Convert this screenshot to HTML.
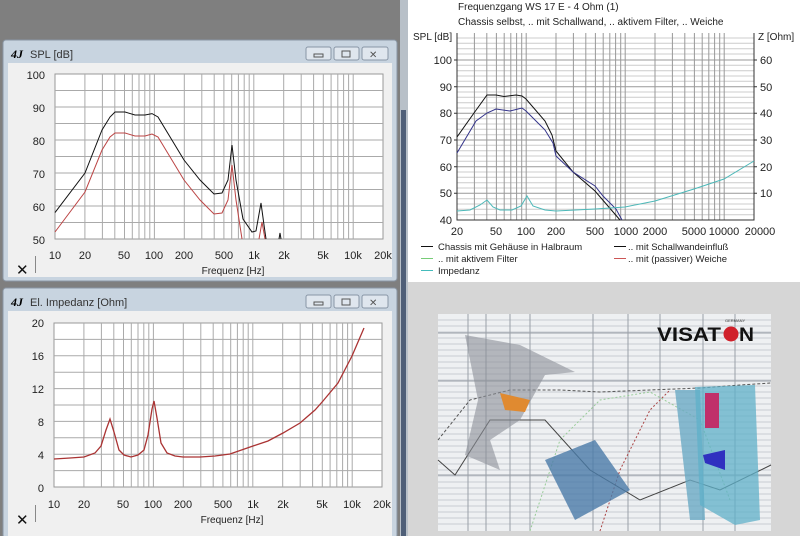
<!DOCTYPE html>
<html><head><meta charset="utf-8"><style>
html,body{margin:0;padding:0;width:800px;height:536px;overflow:hidden;background:#808080;font-family:"Liberation Sans",sans-serif}
svg{position:absolute;left:0;top:0}
</style></head><body>
<svg width="800" height="536" viewBox="0 0 800 536" font-family="Liberation Sans, sans-serif">
<rect x="0" y="0" width="400" height="536" fill="#7f7f7f"/>
<!-- Window 1 -->
<rect x="3" y="40" width="394" height="241" rx="3" fill="#c8d4e0" stroke="#8a96a4"/>
<rect x="8" y="63" width="384" height="214" fill="#f0f0f0"/>
<text x="11" y="58" font-size="12" font-family="Liberation Serif,serif" font-weight="bold" font-style="italic">4J</text>
<text x="30" y="58" font-size="11" fill="#333">SPL [dB]</text>
<g fill="#dfe6ee" stroke="#8896a6"><rect x="306" y="47" width="25" height="13" rx="2"/><rect x="334" y="47" width="25" height="13" rx="2"/><rect x="362" y="47" width="26" height="13" rx="2"/></g>
<rect x="314" y="54" width="9" height="3" fill="none" stroke="#555"/><rect x="342" y="51" width="8" height="6" fill="none" stroke="#555"/>
<text x="369" y="58" font-size="10" fill="#555">✕</text>
<rect x="55" y="74" width="328" height="165" fill="#fff" stroke="#999"/>
<path stroke="#aaa" stroke-width="1" fill="none" d="M84.9 74V239M102.4 74V239M114.8 74V239M124.5 74V239M132.3 74V239M139 74V239M144.8 74V239M149.8 74V239M154.4 74V239M184.3 74V239M201.8 74V239M214.2 74V239M223.9 74V239M231.7 74V239M238.4 74V239M244.2 74V239M249.2 74V239M253.8 74V239M283.7 74V239M301.2 74V239M313.6 74V239M323.3 74V239M331.1 74V239M337.8 74V239M343.6 74V239M348.6 74V239M353.2 74V239M55 90.5H383M55 107H383M55 123.5H383M55 140H383M55 156.5H383M55 173H383M55 189.5H383M55 206H383M55 222.5H383"/>
<path fill="none" stroke="#111" d="M55 212.6L85 173L102 130L110 117L115 112L125 112L135 115L145 115L152 113.6L158 117L184 160L200 180L214 194L222 193L228 180L232 145L236 180L243 219L252 232L256 231L261 203L264 225L266 239M279 239L280 233L281 239"/>
<path fill="none" stroke="#b44" d="M55 232L85 192L102 150L110 137L115 133L125 133L135 136L145 136L152 134L158 137L184 180L200 200L214 214L222 213L228 200L232 165L236 200L242 239M259 239L262 222L265 239"/>
<g font-size="11" fill="#222" text-anchor="end"><text x="45" y="79">100</text><text x="45" y="112">90</text><text x="45" y="145">80</text><text x="45" y="178">70</text><text x="45" y="211">60</text><text x="45" y="244">50</text></g>
<g font-size="11" fill="#222" text-anchor="middle"><text x="55" y="259">10</text><text x="85" y="259">20</text><text x="124" y="259">50</text><text x="154" y="259">100</text><text x="184" y="259">200</text><text x="224" y="259">500</text><text x="254" y="259">1k</text><text x="284" y="259">2k</text><text x="323" y="259">5k</text><text x="353" y="259">10k</text><text x="383" y="259">20k</text></g>
<text x="233" y="274" font-size="10" text-anchor="middle" fill="#222">Frequenz [Hz]</text>
<text x="16" y="275" font-size="15" fill="#111">✕</text><rect x="35" y="256" width="1" height="17" fill="#888"/>
<!-- Window 2 -->
<rect x="3" y="288" width="394" height="250" rx="3" fill="#c8d4e0" stroke="#8a96a4"/>
<rect x="8" y="311" width="384" height="225" fill="#f0f0f0"/>
<text x="11" y="306" font-size="12" font-family="Liberation Serif,serif" font-weight="bold" font-style="italic">4J</text>
<text x="30" y="306" font-size="11" fill="#333">El. Impedanz [Ohm]</text>
<g fill="#dfe6ee" stroke="#8896a6"><rect x="306" y="295" width="25" height="13" rx="2"/><rect x="334" y="295" width="25" height="13" rx="2"/><rect x="362" y="295" width="26" height="13" rx="2"/></g>
<rect x="314" y="302" width="9" height="3" fill="none" stroke="#555"/><rect x="342" y="299" width="8" height="6" fill="none" stroke="#555"/>
<text x="369" y="306" font-size="10" fill="#555">✕</text>
<rect x="54" y="323" width="328" height="164" fill="#fff" stroke="#999"/>
<path stroke="#aaa" stroke-width="1" fill="none" d="M83.9 323V487M101.4 323V487M113.8 323V487M123.5 323V487M131.3 323V487M138 323V487M143.8 323V487M148.8 323V487M153.4 323V487M183.3 323V487M200.8 323V487M213.2 323V487M222.9 323V487M230.7 323V487M237.4 323V487M243.2 323V487M248.2 323V487M252.8 323V487M282.7 323V487M300.2 323V487M312.6 323V487M322.3 323V487M330.1 323V487M336.8 323V487M342.6 323V487M347.6 323V487M352.2 323V487M54 339.4H382M54 355.8H382M54 372.2H382M54 388.6H382M54 405H382M54 421.4H382M54 437.8H382M54 454.2H382M54 470.6H382"/>
<path fill="none" stroke="#a33" stroke-width="1.3" d="M54 459L70 458L84 457L95 453L101 446L106 430L110 419L114 432L119 450L124 455L131 457L138 455L144 450L148 435L152 409L154 401L157 418L161 443L167 453L175 456L183 457L200 457L215 456L230 454L253 446L268 441L283 433L300 423L315 410L323 401L338 383L352 356L364 328"/>
<g font-size="11" fill="#222" text-anchor="end"><text x="44" y="327">20</text><text x="44" y="360">16</text><text x="44" y="393">12</text><text x="44" y="426">8</text><text x="44" y="459">4</text><text x="44" y="492">0</text></g>
<g font-size="11" fill="#222" text-anchor="middle"><text x="54" y="508">10</text><text x="84" y="508">20</text><text x="123" y="508">50</text><text x="153" y="508">100</text><text x="183" y="508">200</text><text x="223" y="508">500</text><text x="253" y="508">1k</text><text x="283" y="508">2k</text><text x="322" y="508">5k</text><text x="352" y="508">10k</text><text x="382" y="508">20k</text></g>
<text x="232" y="523" font-size="10" text-anchor="middle" fill="#222">Frequenz [Hz]</text>
<text x="16" y="525" font-size="15" fill="#111">✕</text><rect x="35" y="505" width="1" height="17" fill="#888"/>
<!-- separator -->
<rect x="400" y="0" width="8" height="536" fill="#b8c0c8"/>
<rect x="401" y="110" width="5" height="426" fill="#4f5f78"/>
<!-- right top -->
<rect x="408" y="0" width="392" height="282" fill="#fff"/>
<rect x="408" y="282" width="392" height="254" fill="#d6d6d6"/>
<text x="458" y="10" font-size="10" fill="#222">Frequenzgang WS 17 E - 4 Ohm   (1)</text>
<text x="458" y="25" font-size="10" fill="#222">Chassis selbst, .. mit Schallwand, .. aktivem Filter, .. Weiche</text>
<text x="413" y="40" font-size="10" fill="#222">SPL [dB]</text>
<text x="758" y="40" font-size="10" fill="#222">Z [Ohm]</text>
<path stroke="#ccc" fill="none" d="M457 38H754M457 43.3H754M457 48.7H754M457 54H754M457 65.3H754M457 70.7H754M457 76H754M457 81.3H754M457 92H754M457 97.3H754M457 102.7H754M457 108H754M457 118.7H754M457 124H754M457 129.3H754M457 134.7H754M457 145.3H754M457 150.7H754M457 156H754M457 161.3H754M457 172H754M457 177.3H754M457 182.7H754M457 188H754M457 198.7H754M457 204H754M457 209.3H754M457 214.7H754"/>
<path stroke="#999" fill="none" d="M457 60H754M457 86.7H754M457 113.3H754M457 140H754M457 166.7H754M457 193.3H754M474.4 33V220M486.8 33V220M496.4 33V220M504.2 33V220M510.8 33V220M516.6 33V220M521.7 33V220M526.2 33V220M556 33V220M573.4 33V220M585.8 33V220M595.4 33V220M603.2 33V220M609.8 33V220M615.6 33V220M620.7 33V220M625.2 33V220M655 33V220M672.4 33V220M684.8 33V220M694.4 33V220M702.2 33V220M708.8 33V220M714.6 33V220M719.7 33V220M724.2 33V220"/>
<path stroke="#333" fill="none" d="M457 33V220H754V33M454 60H457M454 86.7H457M454 113.3H457M454 140H457M454 166.7H457M454 193.3H457M754 60H757M754 86.7H757M754 113.3H757M754 140H757M754 166.7H757M754 193.3H757"/>
<path fill="none" stroke="#111" d="M457 137L474 113L487 95L496 95L504 96.5L516 95L522 96L526 99L545 121L552 135L556 151L573 172L595 191L620 220"/>
<path fill="none" stroke="#33338a" d="M457 153L476 121L487 113L496 109L510 111L522 108L526 111L545 130L553 143L556 156L573 172L595 186L603 196L616 209L622 220"/>
<path fill="none" stroke="#4cb8b8" d="M457 211L470 210L480 205L487 200L493 207L500 210L512 210L521 206L527 196L533 206L545 210L556 211L595 209L625 207L655 201L694 189L724 179L754 161"/>
<g font-size="11" fill="#222" text-anchor="end"><text x="452" y="64">100</text><text x="452" y="91">90</text><text x="452" y="117">80</text><text x="452" y="144">70</text><text x="452" y="171">60</text><text x="452" y="197">50</text><text x="452" y="224">40</text></g>
<g font-size="11" fill="#222"><text x="760" y="64">60</text><text x="760" y="91">50</text><text x="760" y="117">40</text><text x="760" y="144">30</text><text x="760" y="171">20</text><text x="760" y="197">10</text></g>
<g font-size="11" fill="#222" text-anchor="middle"><text x="457" y="235">20</text><text x="496" y="235">50</text><text x="526" y="235">100</text><text x="556" y="235">200</text><text x="595" y="235">500</text><text x="626" y="235">1000</text><text x="655" y="235">2000</text><text x="694" y="235">5000</text><text x="724" y="235">10000</text><text x="760" y="235">20000</text></g>
<g font-size="9.5" fill="#222"><text x="438" y="250">Chassis mit Gehäuse in Halbraum</text><text x="628" y="250">.. mit Schallwandeinfluß</text><text x="438" y="262">.. mit aktivem Filter</text><text x="628" y="262">.. mit (passiver) Weiche</text><text x="438" y="274">Impedanz</text></g>
<path d="M421 246.5H433M614 246.5H626" stroke="#111"/><path d="M421 258.5H433" stroke="#7c7"/><path d="M614 258.5H626" stroke="#c55"/><path d="M421 270.5H433" stroke="#4bb"/>
<!-- image -->
<rect x="438" y="314" width="333" height="217" fill="#eef0f2"/>
<path stroke="#c8ccd2" fill="none" d="M438 320H771M438 326H771M438 332H771M438 338H771M438 344H771M438 350H771M438 356H771M438 362H771M438 368H771M438 374H771M438 380H771M438 386H771M438 392H771M438 398H771M438 404H771M438 410H771M438 416H771M438 422H771M438 428H771M438 434H771M438 440H771M438 446H771M438 452H771M438 458H771M438 464H771M438 470H771M438 476H771M438 482H771M438 488H771M438 494H771M438 500H771M438 506H771M438 512H771M438 518H771M438 524H771"/>
<path stroke="#9aa0a8" fill="none" d="M468 314V531M486 314V531M510 314V531M530 314V531M593 314V531M628 314V531M660 314V531M703 314V531M735 314V531M438 333H771M438 381H771M438 475H771"/>
<path fill="none" stroke="#555" stroke-dasharray="3 2" d="M438 440L470 400L510 390L560 390L600 392L650 390L700 388L740 385L771 383"/>
<path fill="none" stroke="#a44" stroke-dasharray="2 2" d="M600 531L620 470L650 410L670 390"/>
<path fill="none" stroke="#9c9" stroke-dasharray="2 2" d="M530 531L560 440L600 400L650 392L700 420L730 500"/>
<path fill="none" stroke="#444" d="M438 460L455 475L490 420L545 420L590 470L640 500L690 480L720 490L771 465"/>
<polygon points="465,335 520,345 575,372 545,375 520,420 490,440 500,470 465,455 478,400" fill="#8c9098" opacity=".6"/>
<polygon points="500,393 530,400 525,412 505,410" fill="#e08a30"/>
<polygon points="545,460 595,440 630,490 575,520" fill="#4a7aa8" opacity=".8"/>
<polygon points="675,390 700,390 705,520 690,520" fill="#6aaac4" opacity=".8"/>
<polygon points="695,387 755,385 760,520 735,525 700,505" fill="#5fb0c8" opacity=".75"/>
<rect x="705" y="393" width="14" height="35" fill="#c0306a"/>
<polygon points="703,455 725,450 725,470 705,463" fill="#3030c0"/>
<text x="657" y="341" font-size="19" font-weight="bold" fill="#111" textLength="64" lengthAdjust="spacingAndGlyphs">VISAT</text>
<circle cx="731" cy="334" r="7.5" fill="#d0202a"/>
<text x="739" y="341" font-size="19" font-weight="bold" fill="#111" textLength="15" lengthAdjust="spacingAndGlyphs">N</text>
<text x="725" y="322" font-size="4" fill="#333">GERMANY</text>
</svg>
</body></html>
